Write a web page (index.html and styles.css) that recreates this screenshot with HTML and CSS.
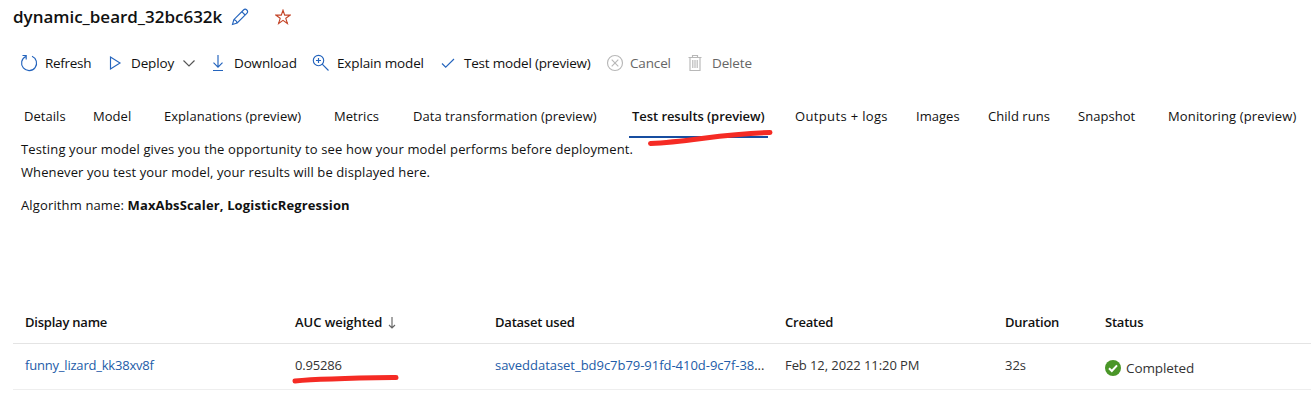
FILE: index.html
```
<!DOCTYPE html>
<html lang="en">
<head>
<meta charset="utf-8">
<title>dynamic_beard_32bc632k</title>
<link rel="stylesheet" href="styles.css">
</head>
<body>
<header class="title-bar">
  <h1>dynamic_beard_32bc632k</h1>
  <svg class="edit" width="18" height="18" viewBox="0 0 18 18"><path d="M1.500 16.500l1.300-4.800L12.500 2a2.200 2.200 0 0 1 3.300 3.300L6.200 15zM10.800 3.700l3.300 3.300M2.800 11.700c1.600.2 2.900 1.600 3.400 3.300"/></svg>
  <svg class="star" width="16" height="16" viewBox="0 0 16 16"><path d="M8 1.200l1.700 4.900h5.400l-4.300 3.200 1.600 5.200L8 11.400l-4.400 3.100 1.600-5.200L.9 6.100h5.400z"/></svg>
</header>
<nav class="toolbar">
  <button class="refresh"><svg width="18" height="18" viewBox="0 0 18 18"><path d="M5.700 2.400A7.500 7.500 0 1 0 12 2.200M2.500 1.500h3.700v4"/></svg><span>Refresh</span></button>
  <button class="deploy"><svg width="15" height="16" viewBox="0 0 15 16"><path d="M2.500 2v12l9.500-6z"/></svg><span>Deploy</span><svg class="chevron" width="14" height="9" viewBox="0 0 14 9"><path d="M1.500 1.500L7 7l5.500-5.500"/></svg></button>
  <button class="download"><svg width="14" height="18" viewBox="0 0 14 18"><path d="M7 1v12M2.500 8.700L7 13.200l4.500-4.500M2 16.500h10"/></svg><span>Download</span></button>
  <button class="explain"><svg width="18" height="18" viewBox="0 0 18 18"><circle cx="6.500" cy="6.500" r="5.200"/><path d="M10.200 10.200l6.300 6.300M6.500 4v5M4 6.500h5"/></svg><span>Explain model</span></button>
  <button class="test"><svg width="16" height="14" viewBox="0 0 16 14"><path d="M2 7.500l3.700 3.700L14 3"/></svg><span>Test model (preview)</span></button>
  <button class="cancel" disabled><svg width="18" height="18" viewBox="0 0 18 18"><circle cx="9" cy="9" r="7.500"/><path d="M5.700 5.700l6.600 6.600M12.300 5.700l-6.600 6.600"/></svg><span>Cancel</span></button>
  <button class="delete" disabled><svg width="14" height="18" viewBox="0 0 14 18"><path d="M.5 3.500h13M4.500 3.500v-2h5v2M2 3.500v13h10v-13M4.800 6v8M7 6v8M9.200 6v8"/></svg><span>Delete</span></button>
</nav>
<nav class="tabs">
  <a>Details</a><a>Model</a><a>Explanations (preview)</a><a>Metrics</a><a>Data transformation (preview)</a><a class="active">Test results (preview)<svg class="mark" width="128" height="18" viewBox="0 0 128 18"><path d="M3.500 14.500C45 12.500 75 4.500 123 3.500"/></svg></a><a class="outputs">Outputs + logs</a><a>Images</a><a>Child runs</a><a>Snapshot</a><a>Monitoring (preview)</a>
</nav>
<section class="intro">
  <p class="line-one">Testing your model gives you the opportunity to see how your model performs before deployment.</p>
  <p class="line-two">Whenever you test your model, your results will be displayed here.</p>
  <p class="algorithm">Algorithm name: <b>MaxAbsScaler, LogisticRegression</b></p>
</section>
<section class="results">
  <div class="row head">
    <span>Display name</span>
    <span class="sort">AUC weighted<svg width="10" height="14" viewBox="0 0 10 14"><path d="M5 1v11M2 9l3 3 3-3"/></svg></span>
    <span>Dataset used</span><span>Created</span><span>Duration</span><span>Status</span>
  </div>
  <div class="row body">
    <a class="run">funny_lizard_kk38xv8f</a>
    <span class="metric">0.95286<svg class="mark" width="110" height="12" viewBox="0 0 110 12"><path d="M4 8C30 5.500 70 5 105 4.500"/></svg></span>
    <span class="dataset"><a>saveddataset_bd9c7b79-91fd-410d-9c7f-38</a>...</span>
    <span class="created">Feb 12, 2022 11:20 PM</span>
    <span>32s</span>
    <span class="status"><svg width="16" height="16" viewBox="0 0 16 16"><circle cx="8" cy="8" r="8"/><path d="M4 8.200l2.800 2.800L12 5.300"/></svg>Completed</span>
  </div>
</section>
</body>
</html>
```
FILE: styles.css
```
* { box-sizing: border-box; }
body {
  margin: 0;
  height: 400px;
  overflow: hidden;
  background: #fff;
  color: #111;
  font: 13px/20px "Open Sans", "Noto Sans", sans-serif;
  white-space: nowrap;
}
h1, p { margin: 0; }
svg { flex: none; fill: none; stroke: #2464bd; stroke-width: 1.15; }

.title-bar { display: flex; align-items: center; height: 34px; padding-left: 13px; }
h1 { width: 218px; font-size: 17px; font-weight: 600; line-height: 34px; letter-spacing: -.02px; }
.star { margin-left: 26px; stroke: #c44528; }

.toolbar { display: flex; height: 58px; padding-left: 20px; align-items: center; }
button {
  display: flex;
  align-items: center;
  flex: none;
  padding: 0;
  border: 0;
  background: none;
  color: #111;
  font: inherit;
  font-size: 13.500px;
  letter-spacing: -.15px;
}
.refresh { width: 88px; gap: 7px; letter-spacing: -.3px; }
.deploy { width: 103px; gap: 8px; }
.deploy span { width: 43px; }
.chevron { stroke: #555; }
.download { width: 101px; gap: 9px; }
.explain { width: 128px; gap: 7px; }
.test { width: 166px; gap: 8px; letter-spacing: -.2px; }
.cancel { width: 82px; gap: 6px; }
.delete { gap: 10px; }
button:disabled { color: #666; }
button:disabled svg { stroke: #b8b8b8; }

.tabs {
  display: grid;
  grid-template-columns: 69px 71px 170px 79px 219px 163px 121px 72px 90px 90px 130px;
  height: 46px;
  padding-left: 24px;
  letter-spacing: .04px;
}
.tabs a { height: 46px; line-height: 49px; }
.tabs .active {
  position: relative;
  width: 139px;
  margin-left: -3px;
  padding-left: 3px;
  border-bottom: 2px solid #174da0;
  font-weight: 600;
  letter-spacing: -.06px;
}
.tabs .outputs { letter-spacing: .35px; }
.tabs a:last-child { letter-spacing: .14px; }
.mark { position: absolute; stroke: #f52b24; stroke-width: 5; stroke-linecap: round; }
.tabs .mark { left: 18px; top: 37px; }

.intro { height: 164px; padding-left: 21px; line-height: 23px; letter-spacing: .14px; }
.line-two { letter-spacing: .1px; }
.algorithm { margin-top: 10px; }

.row {
  display: grid;
  grid-template-columns: 270px 200px 290px 220px 100px 200px;
  margin-left: 13px;
  padding-left: 12px;
  border-bottom: 1px solid #e4e4e4;
}
.head { height: 42px; line-height: 41px; font-weight: 600; letter-spacing: -.22px; }
.sort { display: flex; align-items: center; gap: 5px; letter-spacing: -.04px; }
.sort svg { stroke: #666; }
.body { height: 46px; line-height: 42px; color: #333; border-color: #eee; }
.body a { color: #235ca8; }
.body .run { letter-spacing: -.2px; }
.dataset { letter-spacing: -.03px; }
.created { letter-spacing: -.08px; }
.metric { position: relative; letter-spacing: -.2px; }
.metric .mark { left: -4px; top: 29px; }
.status { display: flex; align-items: center; gap: 5px; height: 48px; font-size: 13.500px; letter-spacing: -.1px; }
.status svg { stroke: #fff; stroke-width: 2; }
.status circle { fill: #4a9628; stroke: none; }
```
